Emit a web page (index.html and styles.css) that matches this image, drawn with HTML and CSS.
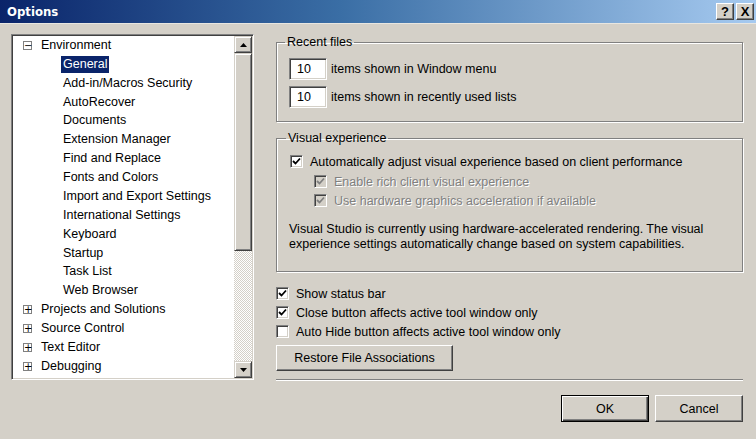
FILE: index.html
```html
<!DOCTYPE html>
<html>
<head>
<meta charset="utf-8">
<link rel="stylesheet" href="styles.css">
</head>
<body>
<div class="dialog">
  <div class="titlebar">
    <span class="title">Options</span>
    <div class="tb-btns">
      <span class="tb-btn">?</span>
      <span class="tb-btn">X</span>
    </div>
  </div>
  <div class="content">
    <div class="tree">
      <div class="tree-list">
        <div class="row top"><span class="exp">&minus;</span><span class="lbl">Environment</span></div>
        <div class="row child"><span class="lbl sel">General</span></div>
        <div class="row child"><span class="lbl">Add-in/Macros Security</span></div>
        <div class="row child"><span class="lbl">AutoRecover</span></div>
        <div class="row child"><span class="lbl">Documents</span></div>
        <div class="row child"><span class="lbl">Extension Manager</span></div>
        <div class="row child"><span class="lbl">Find and Replace</span></div>
        <div class="row child"><span class="lbl">Fonts and Colors</span></div>
        <div class="row child"><span class="lbl">Import and Export Settings</span></div>
        <div class="row child"><span class="lbl">International Settings</span></div>
        <div class="row child"><span class="lbl">Keyboard</span></div>
        <div class="row child"><span class="lbl">Startup</span></div>
        <div class="row child"><span class="lbl">Task List</span></div>
        <div class="row child"><span class="lbl">Web Browser</span></div>
        <div class="row top"><span class="exp">+</span><span class="lbl">Projects and Solutions</span></div>
        <div class="row top"><span class="exp">+</span><span class="lbl">Source Control</span></div>
        <div class="row top"><span class="exp">+</span><span class="lbl">Text Editor</span></div>
        <div class="row top"><span class="exp">+</span><span class="lbl">Debugging</span></div>
      </div>
      <div class="scrollbar">
        <div class="sb-btn"><svg width="7" height="4" viewBox="0 0 7 4"><path d="M3.5 0 L7 4 L0 4 Z" fill="#000"/></svg></div>
        <div class="sb-thumb"></div>
        <div class="sb-track"></div>
        <div class="sb-btn"><svg width="7" height="4" viewBox="0 0 7 4"><path d="M0 0 L7 0 L3.5 4 Z" fill="#000"/></svg></div>
      </div>
    </div>

    <div class="right">
      <fieldset class="group g1">
        <legend>Recent files</legend>
        <div class="num-row"><span class="textbox">10</span><span>items shown in Window menu</span></div>
        <div class="num-row"><span class="textbox">10</span><span>items shown in recently used lists</span></div>
      </fieldset>

      <fieldset class="group g2">
        <legend>Visual experience</legend>
        <div class="chk-row"><span class="chk"><svg width="9" height="9" viewBox="0 0 9 9"><path d="M1 4 L3.5 6.5 L8 1.5" fill="none" stroke="#000" stroke-width="1.8"/></svg></span><span>Automatically adjust visual experience based on client performance</span></div>
        <div class="chk-row sub disabled"><span class="chk"><svg width="9" height="9" viewBox="0 0 9 9"><path d="M1 4 L3.5 6.5 L8 1.5" fill="none" stroke="#808080" stroke-width="1.8"/></svg></span><span>Enable rich client visual experience</span></div>
        <div class="chk-row sub disabled"><span class="chk"><svg width="9" height="9" viewBox="0 0 9 9"><path d="M1 4 L3.5 6.5 L8 1.5" fill="none" stroke="#808080" stroke-width="1.8"/></svg></span><span>Use hardware graphics acceleration if available</span></div>
        <p class="note">Visual Studio is currently using hardware-accelerated rendering. The visual experience settings automatically change based on system capabilities.</p>
      </fieldset>

      <div class="opts">
        <div class="chk-row"><span class="chk"><svg width="9" height="9" viewBox="0 0 9 9"><path d="M1 4 L3.5 6.5 L8 1.5" fill="none" stroke="#000" stroke-width="1.8"/></svg></span><span>Show status bar</span></div>
        <div class="chk-row"><span class="chk"><svg width="9" height="9" viewBox="0 0 9 9"><path d="M1 4 L3.5 6.5 L8 1.5" fill="none" stroke="#000" stroke-width="1.8"/></svg></span><span>Close button affects active tool window only</span></div>
        <div class="chk-row"><span class="chk"></span><span>Auto Hide button affects active tool window only</span></div>
      </div>

      <div class="btn restore">Restore File Associations</div>
      <div class="separator"></div>
      <div class="actions">
        <div class="btn default">OK</div>
        <div class="btn">Cancel</div>
      </div>
    </div>
  </div>
</div>
</body>
</html>
```
FILE: styles.css
```css
* { box-sizing: border-box; }
html, body { margin: 0; padding: 0; }
body {
  width: 756px;
  height: 439px;
  overflow: hidden;
  background: #d4d0c8;
  font-family: "Liberation Sans", Arial, sans-serif;
  font-size: 12.5px;
  color: #000;
}
.dialog {
  width: 756px;
  height: 439px;
  background: #d4d0c8;
}
.titlebar {
  height: 24px;
  background: linear-gradient(to right, #0a246a 0%, #3a6ea5 45%, #a6caf0 100%);
  display: flex;
  align-items: center;
  justify-content: space-between;
  padding: 0 2px 0 7px;
  border-bottom: 1px solid #e8e6e0;
}
.title {
  color: #fff;
  font-weight: bold;
  font-size: 13px;
  font-family: "DejaVu Sans Condensed", "Liberation Sans", sans-serif;
}
.tb-btns { display: flex; gap: 2px; }
.tb-btn {
  width: 18px;
  height: 17px;
  background: #d4d0c8;
  border-top: 1px solid #fff;
  border-left: 1px solid #fff;
  border-right: 1px solid #404040;
  border-bottom: 1px solid #404040;
  box-shadow: inset -1px -1px 0 #808080;
  font-weight: bold;
  font-size: 13px;
  line-height: 15px;
  text-align: center;
  color: #000;
}
.content {
  display: flex;
  padding: 10px 0 0 11px;
  gap: 22px;
}
.tree {
  width: 243px;
  height: 346px;
  background: #fff;
  border-top: 1px solid #808080;
  border-left: 1px solid #808080;
  border-right: 1px solid #fff;
  border-bottom: 1px solid #fff;
  box-shadow: inset 1px 1px 0 #404040, inset -1px -1px 0 #d4d0c8;
  padding: 1px;
  display: flex;
  overflow: hidden;
}
.tree-list {
  flex: 1;
  overflow: hidden;
  padding-left: 10px;
}
.row {
  height: 18.88px;
  display: flex;
  align-items: center;
  white-space: nowrap;
}
.exp {
  width: 9px;
  height: 9px;
  border: 1px solid #808080;
  background: #fff;
  font-size: 10px;
  line-height: 7px;
  text-align: center;
  margin-right: 7px;
  font-family: "DejaVu Sans", sans-serif;
}
.row.child { padding-left: 38px; }
.lbl { padding: 0 2px; line-height: 17px; }
.sel { background: #0a246a; color: #fff; }
.scrollbar {
  width: 18px;
  display: flex;
  flex-direction: column;
}
.sb-btn, .sb-thumb {
  background: #d4d0c8;
  border-top: 1px solid #d4d0c8;
  border-left: 1px solid #d4d0c8;
  border-right: 1px solid #404040;
  border-bottom: 1px solid #404040;
  box-shadow: inset 1px 1px 0 #fff, inset -1px -1px 0 #808080;
}
.sb-btn {
  height: 17px;
  display: flex;
  align-items: center;
  justify-content: center;
}
.sb-thumb { height: 198px; }
.sb-track {
  flex: 1;
  background-image: conic-gradient(#d4d0c8 25%, #fff 0 50%, #d4d0c8 0 75%, #fff 0);
  background-size: 2px 2px;
}
.right {
  width: 467px;
  display: flex;
  flex-direction: column;
  padding-top: 2px;
}
.group {
  margin: 0;
  border: 1px solid #808080;
  box-shadow: inset 1px 1px 0 #fff, 1px 1px 0 #fff;
  padding: 0 10px 0 12px;
}
.group legend {
  padding: 0 2px;
  margin-left: -4px;
  line-height: 12px;
}
.g1 { padding-top: 10px; padding-bottom: 13px; }
.num-row {
  display: flex;
  align-items: center;
  gap: 4px;
  height: 22px;
}
.num-row + .num-row { margin-top: 6px; }
.textbox {
  width: 38px;
  height: 22px;
  background: #fff;
  border-top: 1px solid #808080;
  border-left: 1px solid #808080;
  border-right: 1px solid #fff;
  border-bottom: 1px solid #fff;
  box-shadow: inset 1px 1px 0 #404040, inset -1px -1px 0 #d4d0c8;
  padding-left: 7px;
  line-height: 20px;
}
.g2 { margin-top: 10px; padding-top: 8px; padding-bottom: 19px; padding-left: 13px; }
.chk-row {
  display: flex;
  align-items: center;
  height: 19px;
  white-space: nowrap;
}
.g2 .chk-row.sub:nth-of-type(2) { margin-top: 1px; }
.chk {
  width: 13px;
  height: 13px;
  flex: none;
  background: #fff;
  border-top: 1px solid #808080;
  border-left: 1px solid #808080;
  border-right: 1px solid #fff;
  border-bottom: 1px solid #fff;
  box-shadow: inset 1px 1px 0 #404040, inset -1px -1px 0 #d4d0c8;
  display: flex;
  align-items: center;
  justify-content: center;
  margin-right: 7px;
}
.chk-row.sub { padding-left: 24px; }
.disabled { color: #808080; text-shadow: 1px 1px 0 #fff; }
.disabled .chk { background: #d4d0c8; }
.note {
  margin: 12px 0 0 -1px;
  line-height: 15px;
  width: 440px;
}
.opts { margin-top: 12px; }
.btn {
  background: #d4d0c8;
  border-top: 1px solid #fff;
  border-left: 1px solid #fff;
  border-right: 1px solid #404040;
  border-bottom: 1px solid #404040;
  box-shadow: inset -1px -1px 0 #808080;
  display: flex;
  align-items: center;
  justify-content: center;
}
.restore {
  width: 177px;
  height: 26px;
  margin-top: 4px;
}
.separator {
  margin-top: 8px;
  height: 2px;
  border-top: 1px solid #808080;
  border-bottom: 1px solid #fff;
}
.actions {
  margin-top: 14px;
  display: flex;
  justify-content: flex-end;
  gap: 6px;
}
.actions .btn { width: 88px; height: 27px; }
.btn.default {
  border: 1px solid #000;
  box-shadow: inset 1px 1px 0 #fff, inset -1px -1px 0 #404040, inset -2px -2px 0 #808080;
}
```
